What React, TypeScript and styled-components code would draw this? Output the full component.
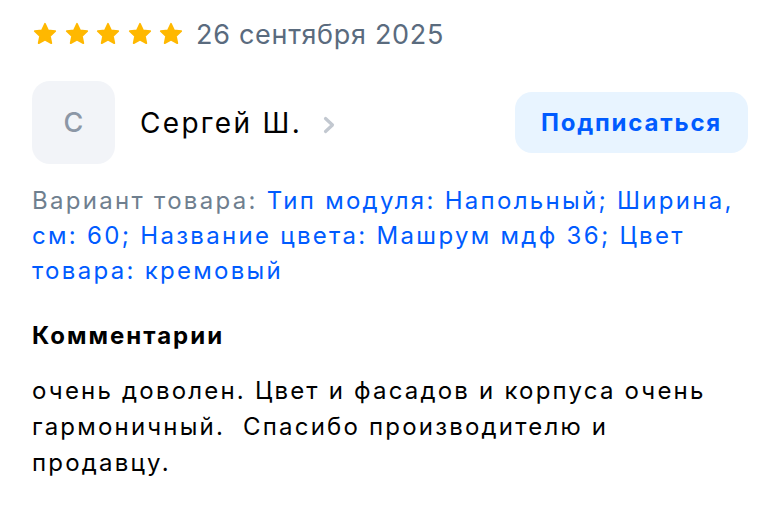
import styled, { createGlobalStyle } from "styled-components";

const GlobalStyle = createGlobalStyle`
  html, body {
    margin: 0;
    padding: 0;
    background: #ffffff;
  }
  body {
    font-family: Inter, "Noto Sans", sans-serif;
    color: #001a34;
  }
`;

const Star = () => (
  <svg width="24" height="24" viewBox="0 0 24 24">
    <path
      d="M12 1.8l3.05 6.55 7.15.85-5.28 4.9 1.4 7.07L12 17.6l-6.32 3.57 1.4-7.07L1.8 9.2l7.15-.85z"
      fill="#ffb800"
      stroke="#ffb800"
      strokeWidth="1.8"
      strokeLinejoin="round"
    />
  </svg>
);

const App = () => {
  return (
    <>
      <GlobalStyle />
      <Review>
        <RatingRow>
          <Stars>
            {[0, 1, 2, 3, 4].map((i) => (
              <Star key={i} />
            ))}
          </Stars>
          <DateText>26 сентября 2025</DateText>
        </RatingRow>

        <AuthorRow>
          <Author>
            <Avatar>С</Avatar>
            <Name>Сергей Ш.</Name>
            <Chevron width="16" height="20" viewBox="0 0 16 20">
              <path
                d="M4.5 3.5l7 6.5-7 6.5"
                fill="none"
                stroke="#c2c8d0"
                strokeWidth="3.2"
                strokeLinecap="round"
                strokeLinejoin="round"
              />
            </Chevron>
          </Author>
          <SubscribeButton>Подписаться</SubscribeButton>
        </AuthorRow>

        <Variant>
          <VariantLabel>Вариант товара: </VariantLabel>
          <VariantValue>
            Тип модуля: Напольный; Ширина, см: 60; Название цвета: Машрум мдф
            36; Цвет товара: кремовый
          </VariantValue>
        </Variant>

        <SectionTitle>Комментарии</SectionTitle>
        <Comment>
          очень доволен. Цвет и фасадов и корпуса очень гармоничный.&nbsp;
          Спасибо производителю и продавцу.
        </Comment>
      </Review>
    </>
  );
};

export default App;

const Review = styled.div`
  width: 716px;
  padding: 16px 0 0 32px;
  display: flex;
  flex-direction: column;
`;

const RatingRow = styled.div`
  display: flex;
  align-items: center;
  gap: 13px;
  height: 36px;
`;

const Stars = styled.div`
  display: flex;
  gap: 7.5px;
  margin-left: 1px;
`;

const DateText = styled.span`
  font-size: 27px;
  letter-spacing: 0.7px;
  color: #5a6b7e;
`;

const AuthorRow = styled.div`
  display: flex;
  align-items: center;
  justify-content: space-between;
  margin-top: 29px;
`;

const Author = styled.div`
  display: flex;
  align-items: center;
`;

const Avatar = styled.div`
  width: 83px;
  height: 83px;
  border-radius: 18px;
  background: #f2f4f8;
  color: #8c97a6;
  font-size: 27px;
  font-weight: 500;
  display: flex;
  align-items: center;
  justify-content: center;
`;

const Name = styled.span`
  font-size: 28px;
  letter-spacing: 2.3px;
  color: #000000;
  margin-left: 25px;
`;

const Chevron = styled.svg`
  margin-left: 19px;
  margin-top: 4px;
`;

const SubscribeButton = styled.button`
  width: 233px;
  height: 61px;
  border: none;
  border-radius: 17px;
  background: #e8f4ff;
  color: #005bff;
  font-family: Inter, sans-serif;
  font-size: 24px;
  font-weight: 700;
  letter-spacing: 1.8px;
  cursor: pointer;
`;

const Variant = styled.p`
  margin: 19px 0 0;
  font-size: 24px;
  letter-spacing: 2.3px;
  line-height: 35px;
`;

const VariantLabel = styled.span`
  color: #6f7f8f;
`;

const VariantValue = styled.span`
  color: #005bff;
`;

const SectionTitle = styled.h3`
  margin: 31px 0 0;
  font-size: 24px;
  font-weight: 700;
  letter-spacing: 2px;
  color: #000000;
  line-height: 34px;
`;

const Comment = styled.p`
  margin: 20px 0 0;
  font-size: 24px;
  letter-spacing: 2.2px;
  line-height: 36px;
  color: #000000;
`;
